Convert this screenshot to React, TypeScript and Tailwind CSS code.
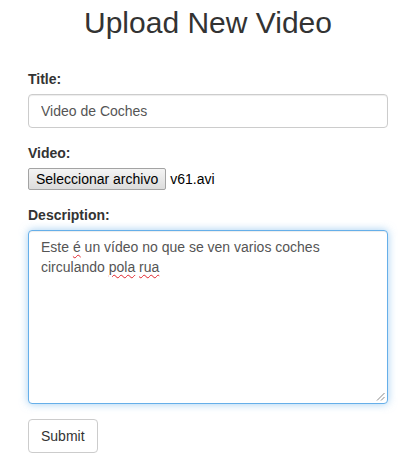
import React from 'react';

const font = { fontFamily: '"Liberation Sans", Arial, sans-serif' };

const Misspelled: React.FC<{ children: React.ReactNode }> = ({ children }) => (
  <span className="underline decoration-wavy decoration-[#e0242b] decoration-1 underline-offset-[2px]">{children}</span>
);

export default function App() {
  return (
    <div className="w-[418px] min-h-[470px] bg-white text-[#333] pl-[28px] pr-[30px]" style={font}>
      {/* Heading */}
      <h2 className="pt-[6px] text-[30px] leading-[33px] font-normal text-center">Upload New Video</h2>

      <form className="mt-[30px] flex flex-col" onSubmit={(e) => e.preventDefault()}>
        {/* Title */}
        <div className="mb-[15px]">
          <label className="block text-[14px] leading-[20px] font-bold mb-[5px]">Title:</label>
          <input
            type="text"
            defaultValue="Video de Coches"
            className="block w-full h-[34px] px-[12px] py-[6px] text-[14px] leading-[20px] text-[#555] bg-white border border-[#ccc] rounded-[4px] shadow-[inset_0_1px_1px_rgba(0,0,0,0.075)] outline-none"
            style={font}
          />
        </div>

        {/* Video */}
        <div className="mb-[15px]">
          <label className="block text-[14px] leading-[20px] font-bold mb-[5px]">Video:</label>
          <div className="flex items-center h-[22px]">
            <span className="h-[22px] flex items-center px-[7px] text-[14px] text-black bg-gradient-to-b from-[#f4f4f4] to-[#dcdcdc] border border-[#a3a3a3] rounded-[2px]">
              Seleccionar archivo
            </span>
            <span className="ml-[4px] text-[14px] text-black">v61.avi</span>
          </div>
        </div>

        {/* Description */}
        <div className="mb-[15px]">
          <label className="block text-[14px] leading-[20px] font-bold mb-[5px]">Description:</label>
          <div className="relative h-[174px] w-full px-[12px] py-[6px] text-[14px] leading-[20px] text-[#555] bg-white border border-[#66afe9] rounded-[4px] shadow-[inset_0_1px_1px_rgba(0,0,0,0.075),0_0_8px_rgba(102,175,233,0.6)]">
            Este <Misspelled>é</Misspelled> un vídeo no que se ven varios coches circulando <Misspelled>pola</Misspelled>{' '}
            <Misspelled>rua</Misspelled>
            <svg className="absolute right-[2px] bottom-[2px]" width="9" height="9" viewBox="0 0 9 9">
              <path d="M8.5 1 L1 8.5 M8.5 5 L5 8.5" stroke="#888" strokeWidth="1" />
            </svg>
          </div>
        </div>

        {/* Submit */}
        <div>
          <button
            type="submit"
            className="h-[34px] px-[12px] text-[14px] leading-[20px] text-[#333] bg-white border border-[#ccc] rounded-[4px]"
            style={font}
          >
            Submit
          </button>
        </div>
      </form>
    </div>
  );
}
